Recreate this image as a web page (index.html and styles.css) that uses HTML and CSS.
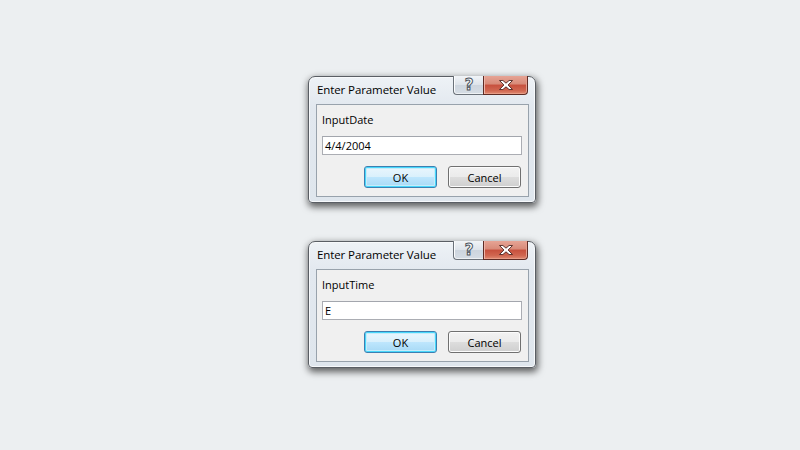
FILE: index.html
```html
<!DOCTYPE html>
<html>
<head>
<meta charset="utf-8">
<link rel="stylesheet" href="styles.css">
</head>
<body>
<div class="stage">
  <div class="dialog">
    <div class="titlebar">
      <span class="title">Enter Parameter Value</span>
      <div class="caption-btns">
        <div class="cbtn help"><svg width="14" height="16" viewBox="0 0 14 16"><text x="7" y="13" text-anchor="middle" class="qmark">?</text></svg></div>
        <div class="cbtn close"><svg width="18" height="12" viewBox="0 0 18 12"><path d="M2.5 1.5h3.4l3.1 2.7 3.1-2.7h3.4l-4.4 4.5 4.4 4.5h-3.4l-3.1-2.7-3.1 2.7h-3.4l4.4-4.5z" class="xmark"/></svg></div>
      </div>
    </div>
    <div class="client">
      <div class="label">InputDate</div>
      <div class="input">4/4/2004</div>
      <div class="actions">
        <div class="btn primary">OK</div>
        <div class="btn">Cancel</div>
      </div>
    </div>
  </div>
  <div class="dialog">
    <div class="titlebar">
      <span class="title">Enter Parameter Value</span>
      <div class="caption-btns">
        <div class="cbtn help"><svg width="14" height="16" viewBox="0 0 14 16"><text x="7" y="13" text-anchor="middle" class="qmark">?</text></svg></div>
        <div class="cbtn close"><svg width="18" height="12" viewBox="0 0 18 12"><path d="M2.5 1.5h3.4l3.1 2.7 3.1-2.7h3.4l-4.4 4.5 4.4 4.5h-3.4l-3.1-2.7-3.1 2.7h-3.4l4.4-4.5z" class="xmark"/></svg></div>
      </div>
    </div>
    <div class="client">
      <div class="label">InputTime</div>
      <div class="input">E</div>
      <div class="actions">
        <div class="btn primary">OK</div>
        <div class="btn">Cancel</div>
      </div>
    </div>
  </div>
</div>
</body>
</html>
```
FILE: styles.css
```css
html, body {
  margin: 0;
  padding: 0;
  background: #eceff1;
  width: 800px;
  height: 450px;
  overflow: hidden;
  font-family: "Open Sans", "Liberation Sans", Arial, sans-serif;
  font-size: 11px;
  color: #000;
}
.stage {
  display: flex;
  flex-direction: column;
  align-items: center;
  padding-top: 76px;
  padding-left: 44px;
  gap: 38px;
}
.dialog {
  width: 226px;
  height: 125px;
  border: 1px solid #5a5e64;
  border-radius: 7px 7px 4px 4px;
  background: linear-gradient(#eef2f6, #e2e8ef 30px, #dfe6ed);
  box-shadow: 1px 3px 7px 1px rgba(0,0,0,0.6), inset 0 0 0 1px #f7f9fb;
  display: flex;
  flex-direction: column;
}
.titlebar {
  height: 27px;
  display: flex;
  align-items: flex-start;
  padding-left: 8px;
}
.title {
  margin-top: 5px;
  font-size: 11.5px;
  letter-spacing: -0.1px;
  color: #000;
}
.caption-btns {
  margin-left: auto;
  margin-right: 7px;
  display: flex;
  margin-top: -1px;
}
.cbtn {
  height: 19px;
  box-sizing: border-box;
  display: flex;
  align-items: center;
  justify-content: center;
  border: 1px solid #6b727a;
  border-top: none;
}
.help {
  width: 30px;
  border-radius: 0 0 0 4px;
  border-right: none;
  background: linear-gradient(#f1f4f7, #dde3ea 50%, #cdd5de 51%, #d6dde5);
  box-shadow: inset 1px 0 0 #fbfcfd, inset 0 -1px 0 #eef1f4;
}
.close {
  width: 45px;
  border-radius: 0 0 4px 0;
  border-color: #5e2b24;
  background: linear-gradient(#e6a495, #d88a78 45%, #c7503d 50%, #d06650 80%, #e08a72);
  box-shadow: inset 1px 0 0 #eeb4a8, inset -1px 0 0 #e59f8f, inset 0 -1px 0 #e89c86;
}
.qmark {
  font-family: "DejaVu Sans", sans-serif;
  font-size: 15px;
  font-weight: bold;
  fill: #ffffff;
  stroke: #4d5560;
  stroke-width: 1px;
}
.xmark {
  fill: #ffffff;
  stroke: #4b2520;
  stroke-width: 0.9px;
}
.client {
  margin: 0 6px 5px 7px;
  flex: 1;
  border: 1px solid #98a2ac;
  background: #f0f0f0;
  padding: 7px 6px 0 5px;
  display: flex;
  flex-direction: column;
}
.label {
  height: 16px;
  line-height: 16px;
  font-size: 11px;
}
.input {
  margin-top: 8px;
  height: 19px;
  width: 200px;
  box-sizing: border-box;
  border: 1px solid #abadb3;
  border-top-color: #a3a6ad;
  background: #fff;
  line-height: 17px;
  padding-left: 2px;
  font-size: 11px;
}
.actions {
  margin-top: 11px;
  display: flex;
  justify-content: flex-end;
  gap: 11px;
  padding-right: 1px;
}
.btn {
  width: 73px;
  height: 22px;
  box-sizing: border-box;
  border: 1px solid #707070;
  border-radius: 3px;
  background: linear-gradient(#f2f2f2, #ebebeb 50%, #dddddd 51%, #cfcfcf);
  box-shadow: inset 0 0 0 1px #fcfcfc;
  display: flex;
  align-items: center;
  justify-content: center;
  font-size: 11px;
}
.btn.primary {
  border-color: #3c7fb1;
  background: linear-gradient(#eaf6fd, #d9f0fc 50%, #bee6fd 51%, #a7d9f5);
  box-shadow: inset 0 0 0 1px #48d7fb, inset 0 0 0 2px #c6ecfa;
}
```
